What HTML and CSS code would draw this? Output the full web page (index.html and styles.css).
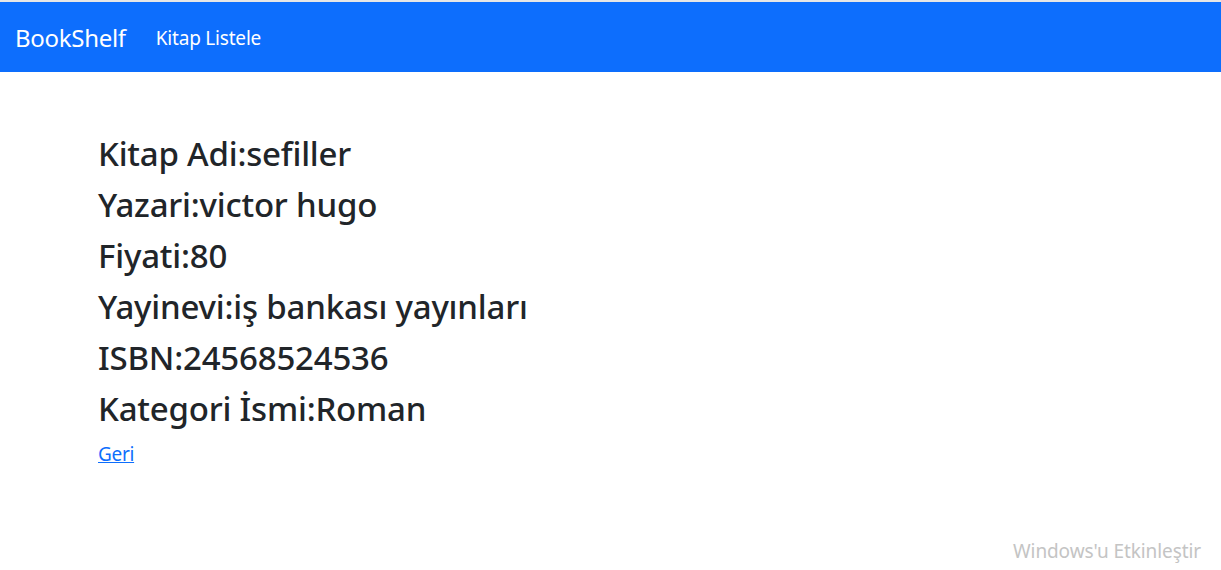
FILE: index.html
```html
<!DOCTYPE html>
<html lang="tr">
<head>
<meta charset="utf-8">
<title>BookShelf</title>
<link rel="stylesheet" href="styles.css">
</head>
<body>
<div class="topline"></div>
<nav class="navbar">
  <a class="brand" href="#">BookShelf</a>
  <a class="nav-link" href="#">Kitap Listele</a>
</nav>
<main class="content">
  <h3 class="field">Kitap Adi:sefiller</h3>
  <h3 class="field">Yazari:victor hugo</h3>
  <h3 class="field">Fiyati:80</h3>
  <h3 class="field">Yayinevi:iş bankası yayınları</h3>
  <h3 class="field">ISBN:24568524536</h3>
  <h3 class="field">Kategori İsmi:Roman</h3>
  <a class="back" href="#">Geri</a>
</main>
<div class="watermark">Windows'u Etkinleştir</div>
</body>
</html>
```

FILE: styles.css
```css
* { box-sizing: border-box; }
html, body { margin: 0; padding: 0; height: 100%; }
body {
  font-family: "Noto Sans", "Open Sans", sans-serif;
  color: #212529;
  background: #fff;
  font-size: 20px;
  position: relative;
  overflow: hidden;
}
.topline { height: 2px; background: #e6e6e6; }
.navbar {
  height: 70px;
  background: #0d6efd;
  display: flex;
  align-items: center;
  padding: 1px 15px 0;
}
.brand {
  color: #fff;
  text-decoration: none;
  font-size: 24px;
  margin-right: 20px;
  letter-spacing: -0.3px;
}
.nav-link {
  color: #fff;
  text-decoration: none;
  font-size: 19px;
  padding: 0 10px;
  letter-spacing: -0.2px;
}
.content {
  padding: 61px 0 0 98px;
  display: flex;
  flex-direction: column;
  align-items: flex-start;
}
.field {
  margin: 0 0 10px;
  font-size: 33px;
  font-weight: 500;
  line-height: 41px;
  letter-spacing: -0.2px;
}
.back {
  color: #0d6efd;
  font-size: 19px;
  line-height: 24px;
  margin-top: 3px;
  text-decoration: underline;
  letter-spacing: -0.3px;
}
.watermark {
  position: absolute;
  right: 20px;
  bottom: 6px;
  color: #c4c4c4;
  font-size: 19px;
  letter-spacing: -0.1px;
}
```
